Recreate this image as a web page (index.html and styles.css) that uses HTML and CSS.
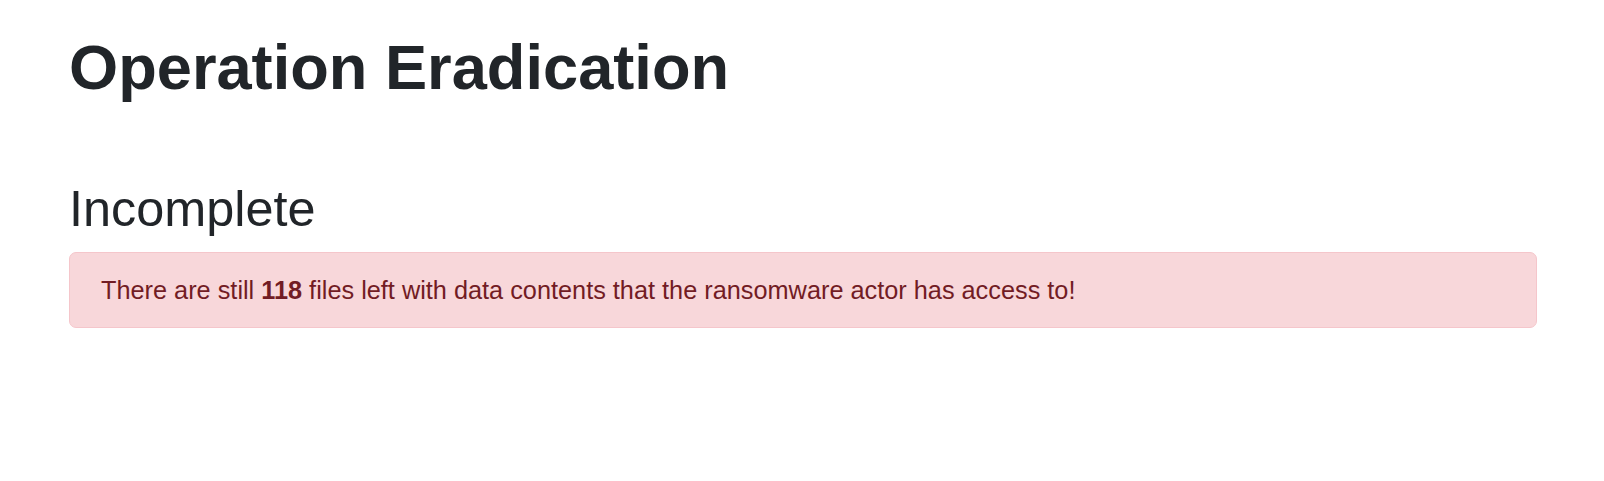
FILE: index.html
```html
<!DOCTYPE html>
<html lang="en">
<head>
<meta charset="utf-8">
<title>Operation Eradication</title>
<link rel="stylesheet" href="styles.css">
</head>
<body>
<main class="page">
  <h1 class="title">Operation Eradication</h1>
  <section class="status">
    <h2 class="status-title">Incomplete</h2>
    <div class="alert alert-danger">There are still <strong>118</strong> files left with data contents that the ransomware actor has access to!</div>
  </section>
</main>
</body>
</html>
```

FILE: styles.css
```css
html, body {
  margin: 0;
  padding: 0;
  background: #ffffff;
}

body {
  font-family: "Liberation Sans", Arial, sans-serif;
  color: #212529;
}

.page {
  padding: 30px 67px 0 69px;
}

.title {
  margin: 0;
  font-size: 63.2px;
  font-weight: 700;
  line-height: 1.2;
  color: #212529;
}

.status {
  margin-top: 73px;
}

.status-title {
  margin: 0 0 13px 0;
  font-size: 50.4px;
  font-weight: 400;
  line-height: 60px;
  color: #212529;
}

.alert {
  padding: 18px 31px;
  font-size: 25.3px;
  line-height: 38px;
  border: 1px solid transparent;
  border-radius: 7px;
}

.alert-danger {
  color: #721c24;
  background-color: #f8d7da;
  border-color: #f5c6cb;
}

.alert strong {
  font-weight: 700;
}
```
